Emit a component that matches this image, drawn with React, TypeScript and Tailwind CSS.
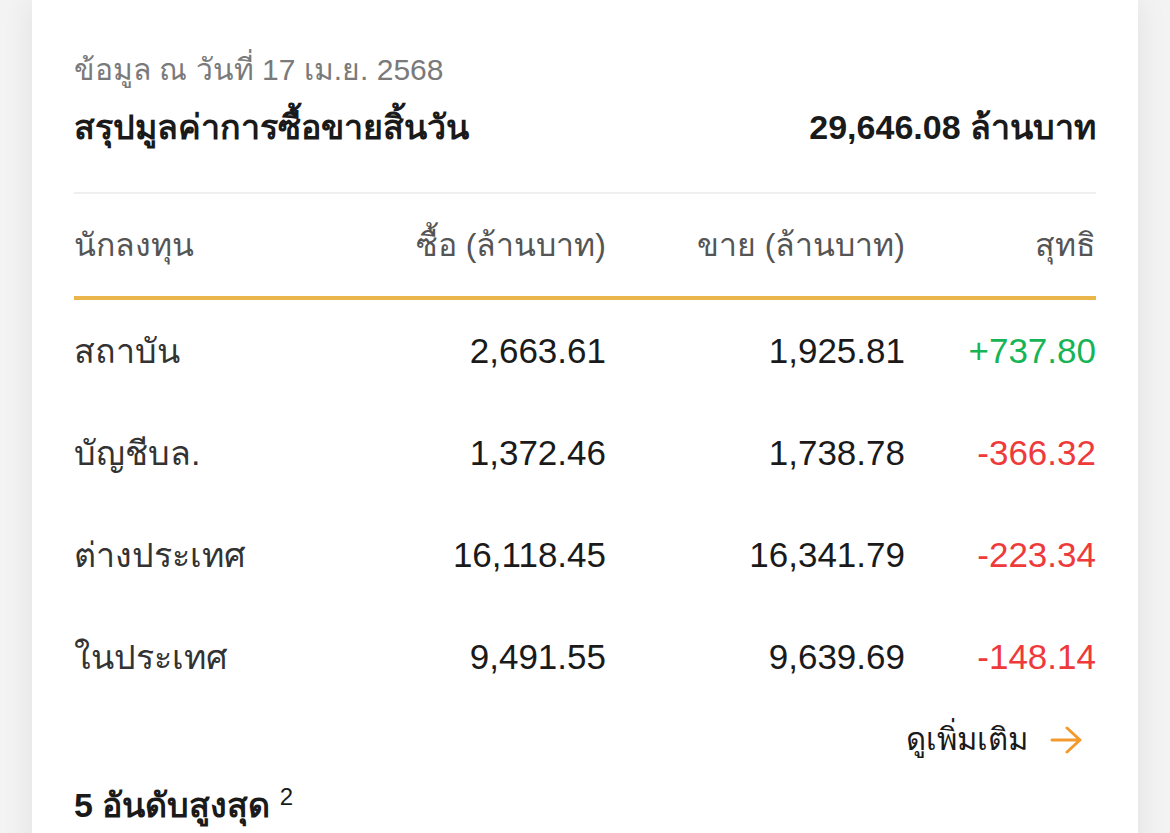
import React from 'react';

type Row = {
  investor: string;
  buy: string;
  sell: string;
  net: string;
};

const rows: Row[] = [
  { investor: 'สถาบัน', buy: '2,663.61', sell: '1,925.81', net: '+737.80' },
  { investor: 'บัญชีบล.', buy: '1,372.46', sell: '1,738.78', net: '-366.32' },
  { investor: 'ต่างประเทศ', buy: '16,118.45', sell: '16,341.79', net: '-223.34' },
  { investor: 'ในประเทศ', buy: '9,491.55', sell: '9,639.69', net: '-148.14' },
];

const font = "font-['Liberation_Sans','Noto_Sans',sans-serif]";

const App: React.FC = () => {
  return (
    <div className={`min-h-[833px] bg-[#f3f3f3] px-8 ${font}`}>
      <div className="bg-white shadow-[0_0_30px_rgba(0,0,0,0.08)] px-[42px] pt-[50px] pb-10">
        {/* Summary header */}
        <p className="text-[30px] leading-[40px] text-[#7a7a7a]">ข้อมูล ณ วันที่ 17 เม.ย. 2568</p>
        <div className="flex items-center justify-between mt-[13px] h-[48px]">
          <h2 className="text-[34px] leading-[48px] font-bold text-[#1a1a1a]">สรุปมูลค่าการซื้อขายสิ้นวัน</h2>
          <span className="text-[34px] leading-[48px] font-bold text-[#1a1a1a]">29,646.08 ล้านบาท</span>
        </div>

        <div className="mt-[41px] h-[2px] bg-[#efefef]" />

        {/* Table */}
        <div className="grid grid-cols-[232px_300px_299px_191px] items-center h-[106px] text-[32px] text-[#555555] border-b-[4px] border-[#eab54a]">
          <span>นักลงทุน</span>
          <span className="text-right">ซื้อ (ล้านบาท)</span>
          <span className="text-right">ขาย (ล้านบาท)</span>
          <span className="text-right">สุทธิ</span>
        </div>

        {rows.map((row) => (
          <div
            key={row.investor}
            className="grid grid-cols-[232px_300px_299px_191px] items-center h-[102px] text-[35px]"
          >
            <span className="text-[34px] text-[#333333]">{row.investor}</span>
            <span className="text-right text-[#1a1a1a]">{row.buy}</span>
            <span className="text-right text-[#1a1a1a]">{row.sell}</span>
            <span className={`text-right ${row.net.startsWith('+') ? 'text-[#16b455]' : 'text-[#ee3a3a]'}`}>
              {row.net}
            </span>
          </div>
        ))}

        <div className="flex justify-end items-center gap-[22px] pr-[14px] mt-2 h-[48px]">
          <span className="text-[31px] text-[#1a1a1a]">ดูเพิ่มเติม</span>
          <svg width="32" height="28" viewBox="0 0 32 28" fill="none" stroke="#f29a2e" strokeWidth="3" strokeLinecap="round" strokeLinejoin="round">
            <path d="M2 14H30M17 2L30 14L17 26" />
          </svg>
        </div>

        <h3 className="mt-[17px] h-[48px] text-[34px] leading-[48px] font-bold text-[#1a1a1a]">
          5 อันดับสูงสุด <sup className="text-[24px] font-normal">2</sup>
        </h3>
      </div>
    </div>
  );
};

export default App;
